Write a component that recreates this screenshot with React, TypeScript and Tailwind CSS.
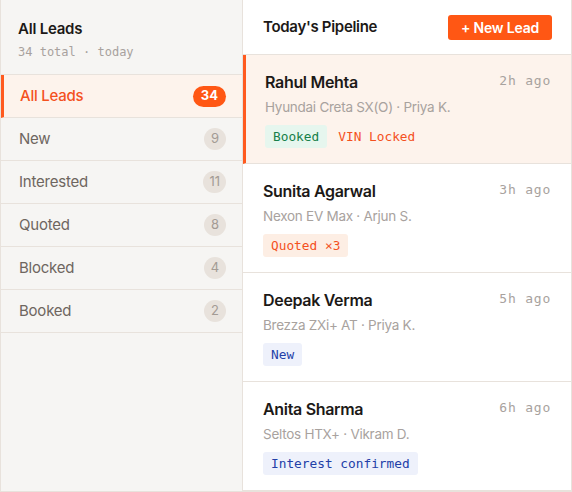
import React from 'react'

const sans = { fontFamily: 'Inter, "Noto Sans", sans-serif' }

type Stage = { label: string; count: number; active?: boolean }

const stages: Stage[] = [
  { label: 'All Leads', count: 34, active: true },
  { label: 'New', count: 9 },
  { label: 'Interested', count: 11 },
  { label: 'Quoted', count: 8 },
  { label: 'Blocked', count: 4 },
  { label: 'Booked', count: 2 },
]

type Tag = { text: string; tone: 'green' | 'orange' | 'blue' | 'plain' }

type Lead = {
  name: string
  detail: string
  ago: string
  tags: Tag[]
  selected?: boolean
}

const leads: Lead[] = [
  {
    name: 'Rahul Mehta',
    detail: 'Hyundai Creta SX(O) · Priya K.',
    ago: '2h ago',
    tags: [
      { text: 'Booked', tone: 'green' },
      { text: 'VIN Locked', tone: 'plain' },
    ],
    selected: true,
  },
  {
    name: 'Sunita Agarwal',
    detail: 'Nexon EV Max · Arjun S.',
    ago: '3h ago',
    tags: [{ text: 'Quoted ×3', tone: 'orange' }],
  },
  {
    name: 'Deepak Verma',
    detail: 'Brezza ZXi+ AT · Priya K.',
    ago: '5h ago',
    tags: [{ text: 'New', tone: 'blue' }],
  },
  {
    name: 'Anita Sharma',
    detail: 'Seltos HTX+ · Vikram D.',
    ago: '6h ago',
    tags: [{ text: 'Interest confirmed', tone: 'blue' }],
  },
]

const toneClass: Record<Tag['tone'], string> = {
  green: 'bg-[#e6f6ee] text-[#17804a] px-2',
  orange: 'bg-[#fdeee4] text-[#f4511e] px-2',
  blue: 'bg-[#eef1fb] text-[#2340a8] px-2',
  plain: 'text-[#f4511e] px-1',
}

function StageRow({ stage }: { stage: Stage }) {
  if (stage.active) {
    return (
      <div className="flex h-[43px] items-center justify-between border-b border-[#e8e2dc] border-l-[3px] border-l-[#ff5a1f] bg-[#fdf3ec] pl-[16px] pr-[16px]">
        <span className="text-[15px] font-medium tracking-[-0.015em] text-[#f4511e]">{stage.label}</span>
        <span className="flex h-[21px] min-w-[30px] items-center justify-center rounded-full bg-[#ff5714] px-2 text-[13px] font-bold text-white">
          {stage.count}
        </span>
      </div>
    )
  }
  return (
    <div className="flex h-[43px] items-center justify-between border-b border-[#e8e2dc] pl-[18px] pr-[16px]">
      <span className="text-[15px] tracking-[-0.015em] text-[#6e6660]">{stage.label}</span>
      <span className="flex h-[22px] min-w-[22px] items-center justify-center rounded-full bg-[#e8e2dc] px-1.5 text-[13px] text-[#a39b94]">
        {stage.count}
      </span>
    </div>
  )
}

function LeadCard({ lead }: { lead: Lead }) {
  return (
    <div
      className={
        lead.selected
          ? 'border-b border-[#e8e2dc] border-l-[3px] border-l-[#ff5a1f] bg-[#fdf3ec] pl-[19px] pr-5 pt-4 pb-[15px]'
          : 'border-b border-[#e8e2dc] bg-white px-5 pt-4 pb-[15px]'
      }
    >
      <div className="flex items-start justify-between">
        <span className="text-[16px] font-semibold leading-[22px] tracking-[-0.02em] text-[#1c1917]">{lead.name}</span>
        <span className="font-['DejaVu_Sans_Mono',monospace] text-[13px] leading-[20px] tracking-[0.06em] text-[#a8a29e]">
          {lead.ago}
        </span>
      </div>
      <div className="mt-1 text-[13.5px] leading-[20px] tracking-[-0.02em] text-[#a8a29e]">{lead.detail}</div>
      <div className="mt-2 flex gap-[7px]">
        {lead.tags.map((t) => (
          <span
            key={t.text}
            className={`flex h-[23px] items-center rounded-[3px] font-['DejaVu_Sans_Mono',monospace] text-[12.8px] ${toneClass[t.tone]}`}
          >
            {t.text}
          </span>
        ))}
      </div>
    </div>
  )
}

export default function App() {
  return (
    <div style={sans} className="flex h-[492px] w-[572px] border-x border-b border-[#e8e2dc] bg-white">
      <aside className="flex w-[242px] shrink-0 flex-col border-r border-[#e8e2dc] bg-[#f6f5f3]">
        <div className="h-[75px] border-b border-[#e8e2dc] pl-[17px] pt-[19px]">
          <div className="text-[15px] font-semibold leading-[20px] tracking-[-0.015em] text-[#1c1917]">All Leads</div>
          <div className="mt-[4px] font-['DejaVu_Sans_Mono',monospace] text-[12px] leading-[18px] text-[#a8a29e]">
            34 total · today
          </div>
        </div>
        {stages.map((s) => (
          <StageRow key={s.label} stage={s} />
        ))}
      </aside>
      <main className="flex min-w-0 flex-1 flex-col">
        <div className="flex h-[56px] items-center justify-between border-b border-[#e8e2dc] pl-5 pr-[19px]">
          <span className="text-[15px] font-semibold tracking-[-0.02em] text-[#1c1917]">Today's Pipeline</span>
          <button className="h-[25px] rounded-[3px] bg-[#ff5714] px-[13px] text-[14px] font-semibold tracking-[-0.015em] text-white">
            + New Lead
          </button>
        </div>
        {leads.map((l) => (
          <LeadCard key={l.name} lead={l} />
        ))}
      </main>
    </div>
  )
}
